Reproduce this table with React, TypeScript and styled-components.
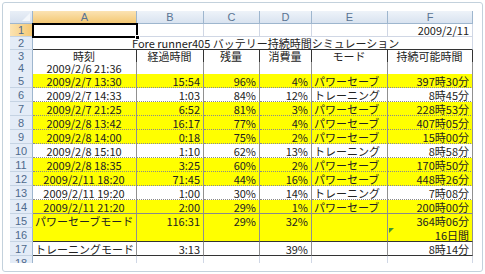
import React from 'react';
import styled, { createGlobalStyle } from 'styled-components';

const GlobalStyle = createGlobalStyle`
  html, body { margin: 0; padding: 0; background: #ffffff; }
  body { font-family: "Noto Sans CJK JP", "Noto Sans", sans-serif; }
`;

const COLS = '23px 104px 67px 56px 52px 76px 85px';
const GRID = '1px solid #d0d7e5';
const VLINE = '1px solid #909090';
const DOT = '1px dotted #8a8a8a';
const SOLID = '1px solid #8a8a8a';
const DARK = '1px solid #333333';
const YELLOW = '#ffff00';

const Frame = styled.div`
  box-sizing: border-box;
  margin: 2px 0 0 2px;
  width: 481px;
  height: 270px;
  border: 1px solid #c3d1dc;
  border-radius: 3px;
  padding: 8px 0 0 7px;
  background: #ffffff;
`;

const Sheet = styled.div`
  width: 463px;
  height: 252px;
  overflow: hidden;
  display: flex;
  flex-direction: column;
`;

const Row = styled.div<{ $h: number }>`
  display: grid;
  grid-template-columns: ${COLS};
  height: ${(p) => p.$h}px;
  flex: none;
`;

const Corner = styled.div`
  box-sizing: border-box;
  position: relative;
  background: linear-gradient(#e9eff7, #d6e0ee);
  border-right: 1px solid #9eb6ce;
  border-bottom: 1px solid #9eb6ce;
  &::after {
    content: '';
    position: absolute;
    right: 2px;
    bottom: 2px;
    width: 8px;
    height: 8px;
    background: #f4f7fb;
    clip-path: polygon(100% 0, 100% 100%, 0 100%);
  }
`;

const ColHead = styled.div<{ $sel?: boolean }>`
  box-sizing: border-box;
  display: flex;
  align-items: center;
  justify-content: center;
  background: ${(p) =>
    p.$sel ? 'linear-gradient(#fbe3b3, #f4c873)' : 'linear-gradient(#eef3f9, #d9e3f0)'};
  border-right: 1px solid #9eb6ce;
  border-bottom: 1px solid ${(p) => (p.$sel ? '#c2a06a' : '#9eb6ce')};
  font-family: "Liberation Sans", Arial, sans-serif;
  font-size: 11px;
  line-height: 1;
  color: #5a7493;
`;

const RowHead = styled.div<{ $sel?: boolean }>`
  box-sizing: border-box;
  display: flex;
  align-items: center;
  justify-content: center;
  padding-top: 1px;
  background: ${(p) => (p.$sel ? 'linear-gradient(90deg, #fbe3b3, #f4c873)' : '#e4ecf7')};
  border-right: 1px solid #9eb6ce;
  border-bottom: 1px solid #c5d3e3;
  font-family: "Liberation Sans", Arial, sans-serif;
  font-size: 11px;
  line-height: 1;
  color: #4f6a8c;
`;

type Align = 'left' | 'center' | 'right';

const Cell = styled.div<{ $align?: Align; $bg?: string; $r?: string; $b?: string; $span?: number; $pl?: number }>`
  box-sizing: border-box;
  position: relative;
  display: flex;
  align-items: center;
  justify-content: ${(p) =>
    p.$align === 'right' ? 'flex-end' : p.$align === 'center' ? 'center' : 'flex-start'};
  padding: 1px 3px 0 ${(p) => p.$pl ?? 2}px;
  background: ${(p) => p.$bg ?? '#ffffff'};
  border-right: ${(p) => p.$r ?? GRID};
  border-bottom: ${(p) => p.$b ?? GRID};
  grid-column: ${(p) => (p.$span ? `span ${p.$span}` : 'auto')};
  font-size: 11px;
  line-height: 1;
  color: #222222;
  white-space: nowrap;
`;

const Selected = styled(Cell)`
  z-index: 2;
  &::before {
    content: '';
    position: absolute;
    left: -1px;
    top: -1px;
    right: -2px;
    bottom: -2px;
    border: 2px solid #000;
  }
  &::after {
    content: '';
    position: absolute;
    right: -4px;
    bottom: -4px;
    width: 5px;
    height: 5px;
    background: #000;
    border: 1px solid #fff;
    box-sizing: border-box;
  }
`;

const Flagged = styled(Cell)`
  &::before {
    content: '';
    position: absolute;
    left: 1px;
    top: 0;
    width: 5px;
    height: 5px;
    background: #3f9a2f;
    clip-path: polygon(0 0, 100% 0, 0 100%);
  }
`;

type DataRow = [string, string, string, string, string, string, boolean];

const DATA: DataRow[] = [
  ['2009/2/7 13:30', '15:54', '96%', '4%', 'パワーセーブ', '397時30分', true],
  ['2009/2/7 14:33', '1:03', '84%', '12%', 'トレーニング', '8時45分', false],
  ['2009/2/7 21:25', '6:52', '81%', '3%', 'パワーセーブ', '228時53分', true],
  ['2009/2/8 13:42', '16:17', '77%', '4%', 'パワーセーブ', '407時05分', true],
  ['2009/2/8 14:00', '0:18', '75%', '2%', 'パワーセーブ', '15時00分', true],
  ['2009/2/8 15:10', '1:10', '62%', '13%', 'トレーニング', '8時58分', false],
  ['2009/2/8 18:35', '3:25', '60%', '2%', 'パワーセーブ', '170時50分', true],
  ['2009/2/11 18:20', '71:45', '44%', '16%', 'パワーセーブ', '448時26分', true],
  ['2009/2/11 19:20', '1:00', '30%', '14%', 'トレーニング', '7時08分', false],
  ['2009/2/11 21:20', '2:00', '29%', '1%', 'パワーセーブ', '200時00分', true],
];

const HEADERS = ['時刻', '経過時間', '残量', '消費量', 'モード', '持続可能時間'];

export default function App() {
  return (
    <>
      <GlobalStyle />
      <Frame>
        <Sheet>
          <Row $h={13}>
            <Corner />
            <ColHead $sel>A</ColHead>
            <ColHead>B</ColHead>
            <ColHead>C</ColHead>
            <ColHead>D</ColHead>
            <ColHead>E</ColHead>
            <ColHead>F</ColHead>
          </Row>

          <Row $h={13}>
            <RowHead $sel>1</RowHead>
            <Selected />
            <Cell />
            <Cell />
            <Cell />
            <Cell />
            <Cell $align="right">2009/2/11</Cell>
          </Row>

          <Row $h={13}>
            <RowHead>2</RowHead>
            <Cell $span={6} $b={DARK} $pl={99}>
              Fore runner405 バッテリー持続時間シミュレーション
            </Cell>
          </Row>

          <Row $h={12}>
            <RowHead>3</RowHead>
            {HEADERS.map((h) => (
              <Cell key={h} $align="center" $r={DARK} $b={SOLID}>
                {h}
              </Cell>
            ))}
          </Row>

          <Row $h={12}>
            <RowHead>4</RowHead>
            <Cell $align="center" $r={VLINE} $b={DOT}>2009/2/6 21:36</Cell>
            <Cell $r={VLINE} $b={DOT} />
            <Cell $r={VLINE} $b={DOT} />
            <Cell $r={VLINE} $b={DOT} />
            <Cell $r={VLINE} $b={DOT} />
            <Cell $r={VLINE} $b={DOT} />
          </Row>

          {DATA.map((d, i) => {
            const bg = d[6] ? YELLOW : '#ffffff';
            const b = i === DATA.length - 1 ? SOLID : DOT;
            return (
              <Row $h={14} key={d[0]}>
                <RowHead>{i + 5}</RowHead>
                <Cell $align="center" $bg={bg} $r={VLINE} $b={b}>{d[0]}</Cell>
                <Cell $align="right" $bg={bg} $r={VLINE} $b={b}>{d[1]}</Cell>
                <Cell $align="right" $bg={bg} $r={VLINE} $b={b}>{d[2]}</Cell>
                <Cell $align="right" $bg={bg} $r={VLINE} $b={b}>{d[3]}</Cell>
                <Cell $align="left" $bg={bg} $r={VLINE} $b={b}>{d[4]}</Cell>
                <Cell $align="right" $bg={bg} $r={VLINE} $b={b}>{d[5]}</Cell>
              </Row>
            );
          })}

          <Row $h={14}>
            <RowHead>15</RowHead>
            <Cell $bg={YELLOW} $r={VLINE} $b="none">パワーセーブモード</Cell>
            <Cell $align="right" $bg={YELLOW} $r={VLINE} $b="none">116:31</Cell>
            <Cell $align="right" $bg={YELLOW} $r={VLINE} $b="none">29%</Cell>
            <Cell $align="right" $bg={YELLOW} $r={VLINE} $b="none">32%</Cell>
            <Cell $bg={YELLOW} $r={VLINE} $b="none" />
            <Cell $align="right" $bg={YELLOW} $r={VLINE} $b="none">364時06分</Cell>
          </Row>

          <Row $h={14}>
            <RowHead>16</RowHead>
            <Cell $bg={YELLOW} $r={VLINE} $b={DARK} />
            <Cell $bg={YELLOW} $r={VLINE} $b={DARK} />
            <Cell $bg={YELLOW} $r={VLINE} $b={DARK} />
            <Cell $bg={YELLOW} $r={VLINE} $b={DARK} />
            <Cell $bg={YELLOW} $r={VLINE} $b={DARK} />
            <Flagged $align="right" $bg={YELLOW} $r={VLINE} $b={DARK}>16日間</Flagged>
          </Row>

          <Row $h={14}>
            <RowHead>17</RowHead>
            <Cell $r={VLINE} $b={DARK}>トレーニングモード</Cell>
            <Cell $align="right" $r={VLINE} $b={DARK}>3:13</Cell>
            <Cell $r={VLINE} $b={DARK} />
            <Cell $align="right" $r={VLINE} $b={DARK}>39%</Cell>
            <Cell $r={VLINE} $b={DARK} />
            <Cell $align="right" $r={VLINE} $b={DARK}>8時14分</Cell>
          </Row>

          <Row $h={14}>
            <RowHead>18</RowHead>
            <Cell />
            <Cell />
            <Cell />
            <Cell />
            <Cell />
            <Cell />
          </Row>
        </Sheet>
      </Frame>
    </>
  );
}
